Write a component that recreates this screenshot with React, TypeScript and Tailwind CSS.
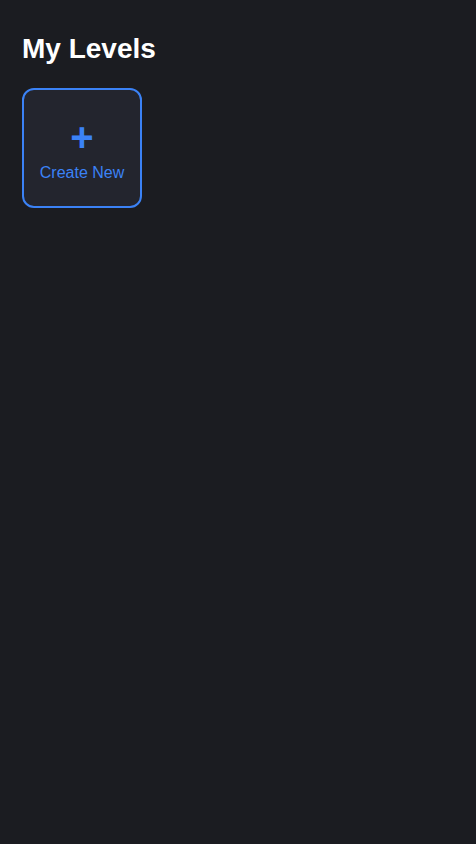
export default function App() {
  return (
    <main
      className="min-h-screen bg-[#1b1c21] px-[22px] pt-[22px] text-white"
      style={{ fontFamily: '"Liberation Sans", Arial, sans-serif' }}
    >
      <h1 className="text-[28px] font-bold leading-[54px]">My Levels</h1>

      <div className="mt-[12px] flex">
        {/* Create card */}
        <button className="flex h-[120px] w-[120px] flex-col items-center justify-center rounded-xl border-2 border-[#3b82f6] bg-[#23252e] pt-[6px] text-[#3b82f6]">
          <span className="text-[40px] font-bold leading-[40px]">+</span>
          <span className="mt-[4px] text-base">Create New</span>
        </button>
      </div>
    </main>
  );
}
